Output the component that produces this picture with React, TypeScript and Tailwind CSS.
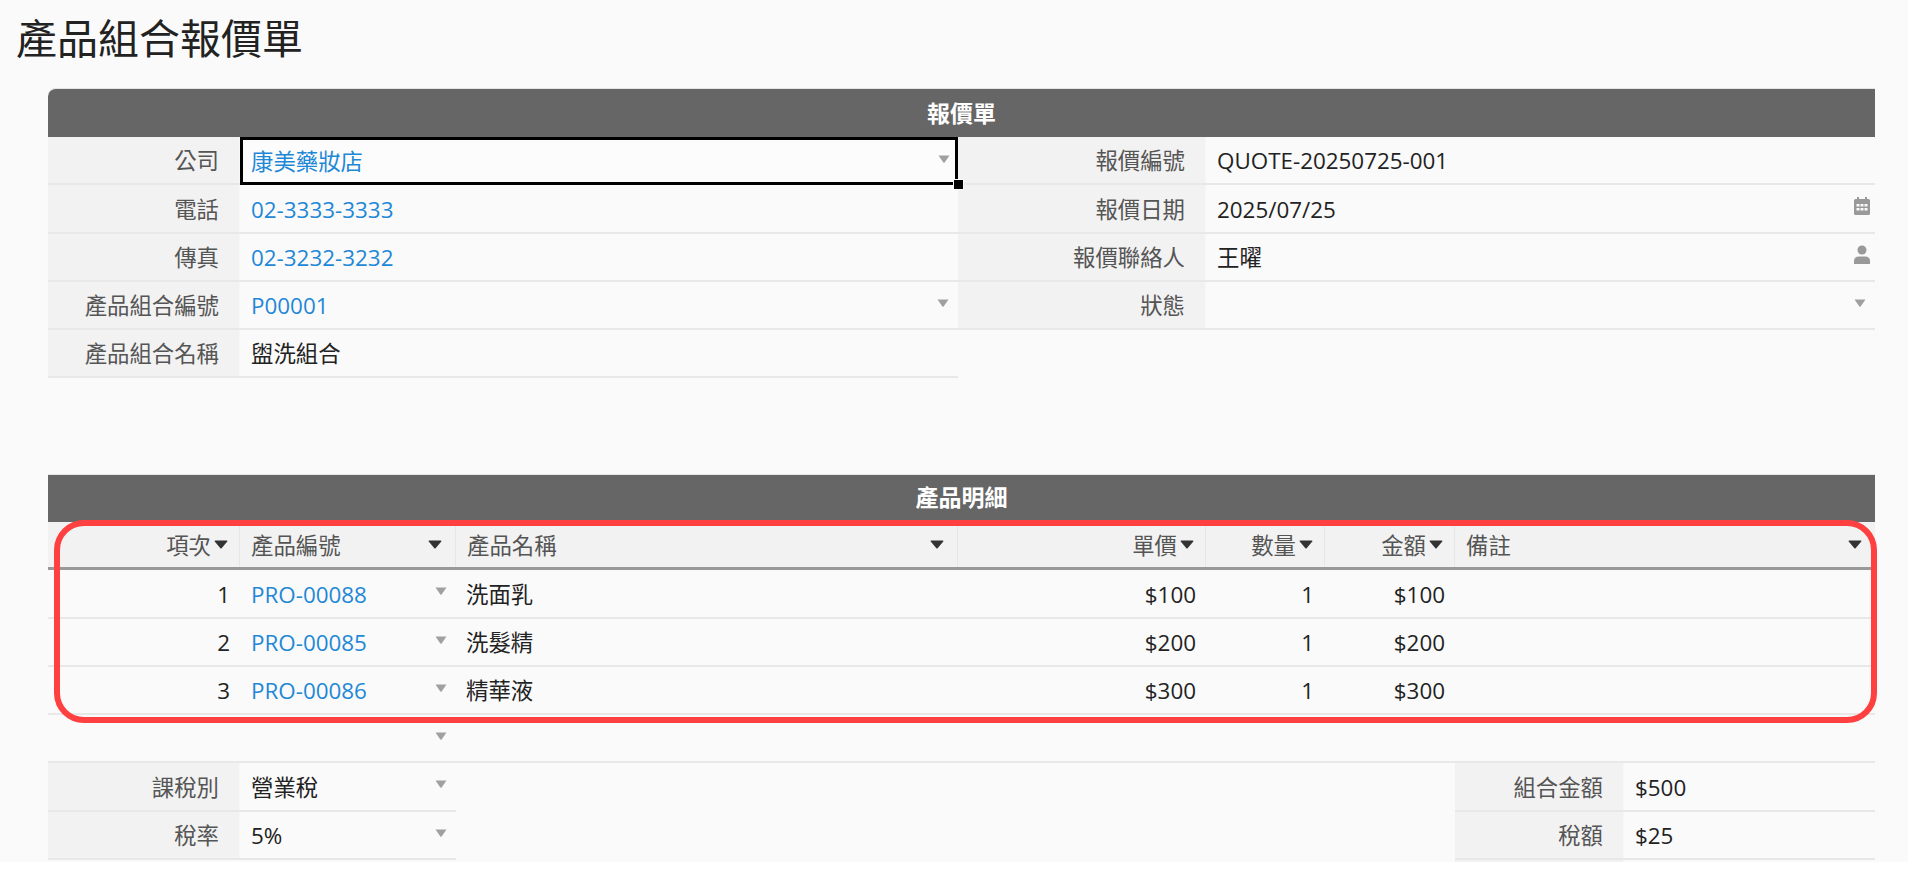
import React from "react";

const BLUE = "text-[#1e88d6]";

function Caret({ dark = false }: { dark?: boolean }) {
  return dark ? (
    <svg width="14" height="9" viewBox="0 0 14 9" className="shrink-0 text-[#333]">
      <path d="M0.5 1.2 Q0.5 0.5 1.5 0.5 H12.5 Q13.5 0.5 13.5 1.2 L7.6 8.3 Q7 8.8 6.4 8.3 Z" fill="currentColor" />
    </svg>
  ) : (
    <svg width="12" height="8" viewBox="0 0 12 8" className="shrink-0 text-[#a0a0a0] mb-1 mr-[1px]">
      <path d="M0.5 0.5 H11.5 L6.6 7.5 Q6 8 5.4 7.5 Z" fill="currentColor" />
    </svg>
  );
}

function Calendar() {
  return (
    <svg width="16" height="18" viewBox="0 0 16 18" className="shrink-0 text-[#999] mb-1 -mr-[3px]">
      <path
        fill="currentColor"
        fillRule="evenodd"
        d="M3 0h2v2h6V0h2v2h1.5A1.5 1.5 0 0 1 16 3.500V16.500A1.500 1.500 0 0 1 14.500 18H1.500A1.500 1.500 0 0 1 0 16.500V3.500A1.500 1.500 0 0 1 1.500 2H3zM2.500 7v2.500h3V7zM6.500 7v2.500h3V7zM10.500 7v2.500h3V7zM2.500 11v2.500h3V11zM6.500 11v2.500h3V11zM10.500 11v2.500h3V11z"
      />
    </svg>
  );
}

function Person() {
  return (
    <svg width="16" height="19" viewBox="0 0 16 19" className="shrink-0 text-[#999] mb-1 -mr-[3px]">
      <circle cx="8" cy="5" r="4.500" fill="currentColor" />
      <path d="M0 19V16Q0 11.500 5 11.500H11Q16 11.500 16 16V19Z" fill="currentColor" />
    </svg>
  );
}

function Label({ text, className = "" }: { text: string; className?: string }) {
  return (
    <div className={`flex items-center justify-end pr-[20px] pt-[2px] bg-[#f2f2f2] text-[#555] border-r border-[#f7f7f7] ${className}`}>
      {text}
    </div>
  );
}

function Value({
  text,
  link = false,
  icon,
  className = "pl-[11px] pr-[8px]",
}: {
  text?: string;
  link?: boolean;
  icon?: React.ReactNode;
  className?: string;
}) {
  return (
    <div className={`flex flex-1 items-center justify-between ${link ? BLUE : "text-[#222]"} ${className}`}>
      <span className="pt-[2px]">{text}</span>
      {icon}
    </div>
  );
}

function Row({ children, className = "" }: { children: React.ReactNode; className?: string }) {
  return <div className={`flex h-[48.25px] border-b-2 border-[#e8e8e8] ${className}`}>{children}</div>;
}

function SectionBar({ title, className = "" }: { title: string; className?: string }) {
  return (
    <div className={`flex h-[48px] items-center justify-center bg-[#666] text-white text-[23px] font-bold border-t border-[#e5e5e5] ${className}`}>
      {title}
    </div>
  );
}

function HeadCell({ text, right = false }: { text: string; right?: boolean }) {
  return (
    <div className={`flex items-center border-r border-[#e6e6e6] text-[#555] ${right ? "justify-end gap-[3px] pr-[11px]" : "justify-between pl-[11px] pr-[13px]"}`}>
      <span className="pt-[2px]">{text}</span>
      <Caret dark />
    </div>
  );
}

const items = [
  { n: "1", code: "PRO-00088", name: "洗面乳", price: "$100", qty: "1", total: "$100" },
  { n: "2", code: "PRO-00085", name: "洗髮精", price: "$200", qty: "1", total: "$200" },
  { n: "3", code: "PRO-00086", name: "精華液", price: "$300", qty: "1", total: "$300" },
];

const COLS = "grid-cols-[192px_216px_502px_248px_119px_130px_420px]";

export default function App() {
  return (
    <div className="bg-white h-[874px] overflow-hidden">
      <div className="relative h-[862px] overflow-hidden bg-[#fafafa] font-['Open_Sans','Noto_Sans_CJK_TC',sans-serif] text-[22.4px]">
        <h1 className="h-[88px] pl-4 pt-[9px] text-[41px] leading-[54px] text-[#222] font-['Noto_Sans_CJK_TC',sans-serif]">
          產品組合報價單
        </h1>

        <div className="ml-12 w-[1827px]">
          <SectionBar title="報價單" className="rounded-tl-lg h-[49px]" />
          <div className="flex">
            <div className="w-[910px]">
              <Row className="relative">
                <Label text="公司" className="w-[192px]" />
                <Value
                  text="康美藥妝店"
                  link
                  icon={<Caret />}
                  className="border-[3px] border-black -mb-[2px] pl-[8px] pr-[4px] bg-[#fcfcfc]"
                />
                <span className="absolute -right-[5px] -bottom-[6px] z-10 h-[9px] w-[9px] bg-black outline outline-1 outline-[#fafafa]" />
              </Row>
              <Row>
                <Label text="電話" className="w-[192px]" />
                <Value text="02-3333-3333" link />
              </Row>
              <Row>
                <Label text="傳真" className="w-[192px]" />
                <Value text="02-3232-3232" link />
              </Row>
              <Row>
                <Label text="產品組合編號" className="w-[192px]" />
                <Value text="P00001" link icon={<Caret />} />
              </Row>
              <Row>
                <Label text="產品組合名稱" className="w-[192px]" />
                <Value text="盥洗組合" />
              </Row>
            </div>
            <div className="flex-1">
              <Row>
                <Label text="報價編號" className="w-[248px]" />
                <Value text="QUOTE-20250725-001" />
              </Row>
              <Row>
                <Label text="報價日期" className="w-[248px]" />
                <Value text="2025/07/25" icon={<Calendar />} />
              </Row>
              <Row>
                <Label text="報價聯絡人" className="w-[248px]" />
                <Value text="王曜" icon={<Person />} />
              </Row>
              <Row>
                <Label text="狀態" className="w-[248px]" />
                <Value icon={<Caret />} />
              </Row>
            </div>
          </div>

          <SectionBar title="產品明細" className="mt-[96px] pb-[3px]" />
          <div className={`grid ${COLS} h-[48px] bg-[#f2f2f2] border-b-[3px] border-[#999]`}>
            <HeadCell text="項次" right />
            <HeadCell text="產品編號" />
            <HeadCell text="產品名稱" />
            <HeadCell text="單價" right />
            <HeadCell text="數量" right />
            <HeadCell text="金額" right />
            <div className="flex items-center justify-between pl-[11px] pr-[13px] text-[#555]">
              <span className="pt-[2px]">備註</span>
              <Caret dark />
            </div>
          </div>
          {items.map((it) => (
            <div key={it.n} className={`grid ${COLS} h-[48.25px] border-b-2 border-[#e8e8e8] text-[#222]`}>
              <div className="flex items-center justify-end pr-[10px] pt-[2px]">{it.n}</div>
              <div className={`flex items-center justify-between pl-[11px] pr-[8px] ${BLUE}`}>
                <span className="pt-[2px]">{it.code}</span>
                <Caret />
              </div>
              <div className="flex items-center pl-[10px] pt-[2px]">{it.name}</div>
              <div className="flex items-center justify-end pr-[10px] pt-[2px]">{it.price}</div>
              <div className="flex items-center justify-end pr-[11px] pt-[2px]">{it.qty}</div>
              <div className="flex items-center justify-end pr-[10px] pt-[2px]">{it.total}</div>
              <div />
            </div>
          ))}
          <div className={`grid ${COLS} h-[48.25px] border-b-2 border-[#e8e8e8]`}>
            <div />
            <div className="flex items-center justify-end pr-[8px]">
              <Caret />
            </div>
          </div>

          <div className="flex justify-between">
            <div className="w-[408px]">
              <Row>
                <Label text="課稅別" className="w-[192px]" />
                <Value text="營業稅" icon={<Caret />} />
              </Row>
              <Row>
                <Label text="稅率" className="w-[192px]" />
                <Value text="5%" icon={<Caret />} />
              </Row>
            </div>
            <div className="w-[420px]">
              <Row>
                <Label text="組合金額" className="w-[169px]" />
                <Value text="$500" />
              </Row>
              <Row>
                <Label text="稅額" className="w-[169px]" />
                <Value text="$25" />
              </Row>
              <Row>
                <Label text="" className="w-[169px]" />
              </Row>
            </div>
          </div>
        </div>

        <div className="pointer-events-none absolute left-[54px] top-[520px] h-[203px] w-[1823px] rounded-[30px] border-[6px] border-[#ff4040]" />
      </div>
    </div>
  );
}
